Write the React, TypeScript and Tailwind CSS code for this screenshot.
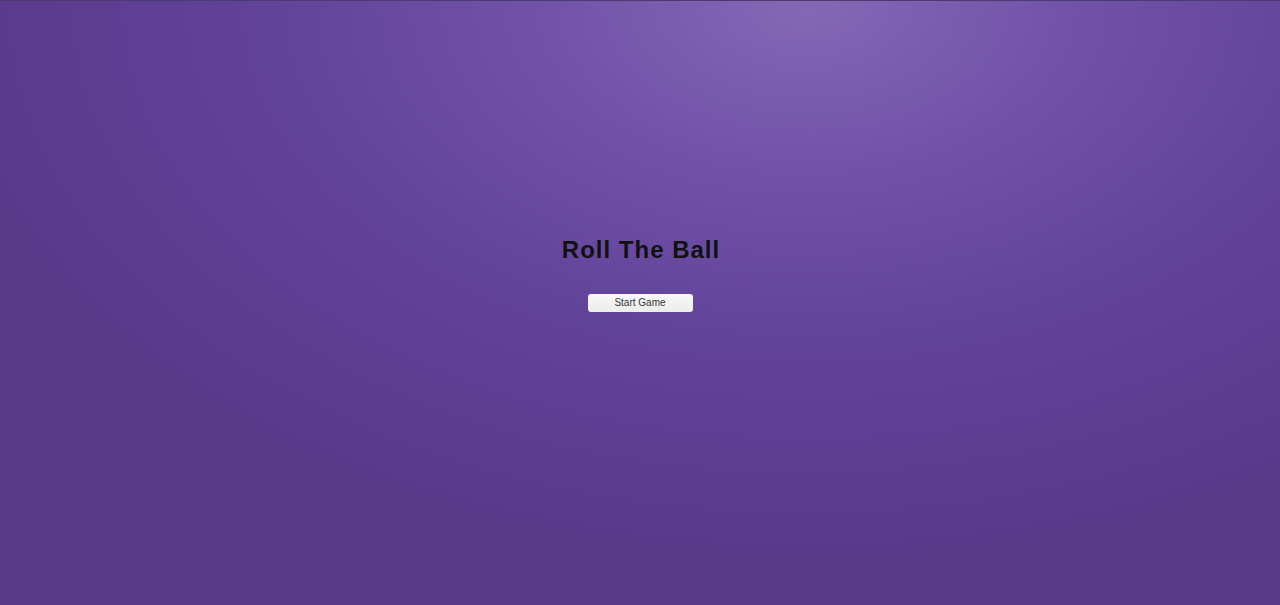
export default function App() {
  return (
    <div className="min-h-[605px] w-full border-t border-[#4b3d6b] bg-[radial-gradient(ellipse_70%_95%_at_63%_0%,#8568b5_0%,#7152a8_30%,#62439a_60%,#5a3888_100%)] font-['Liberation_Sans',Arial,sans-serif]">
      <div className="flex flex-col items-center pt-[235px]">
        <h1 className="pl-[2px] text-[24px] leading-[28px] font-bold tracking-[1px] text-[#111]">Roll The Ball</h1>
        <button className="mt-[30px] h-[18px] w-[105px] rounded-[3px] bg-gradient-to-b from-[#f8f8f8] to-[#ececec] text-[10px] leading-[18px] text-[#333]">
          Start Game
        </button>
      </div>
    </div>
  )
}
